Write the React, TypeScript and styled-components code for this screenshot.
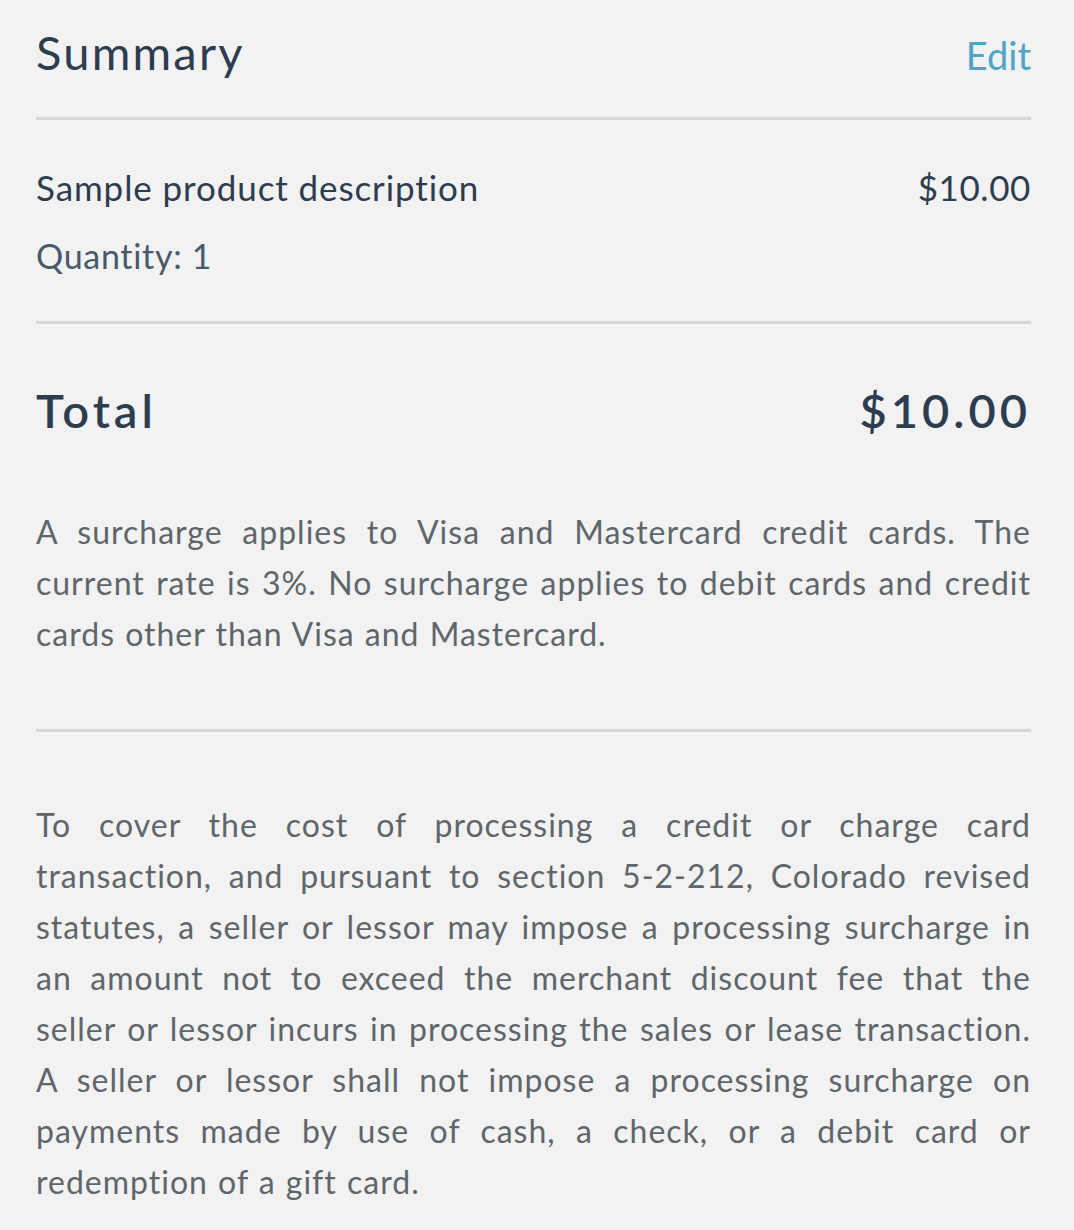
import { createGlobalStyle, styled } from "styled-components";

const GlobalStyle = createGlobalStyle`
  html, body {
    margin: 0;
    padding: 0;
    background: #f2f2f2;
  }
  body {
    font-family: "Lato", "Liberation Sans", sans-serif;
    -webkit-font-smoothing: antialiased;
  }
`;

const Wrapper = styled.div`
  width: 995px;
  padding: 0 43px 0 36px;
  min-height: 1230px;
  background: #f2f2f2;
  color: #2d3d4f;
`;

const Header = styled.div`
  display: flex;
  justify-content: space-between;
  align-items: baseline;
  height: 117px;
  padding-top: 29px;
  box-sizing: border-box;
`;

const Title = styled.h2`
  margin: 0;
  font-size: 47px;
  font-weight: 400;
  letter-spacing: 2.2px;
  line-height: 1;
`;

const EditLink = styled.a`
  font-size: 38px;
  color: #4fa5c6;
  text-decoration: none;
  cursor: pointer;
`;

const Divider = styled.hr`
  margin: 0;
  border: none;
  height: 3px;
  background: #d5d7d7;
`;

const Item = styled.div`
  padding: 46px 0 45px;
  display: flex;
  flex-direction: column;
  gap: 27px;
`;

const Row = styled.div`
  display: flex;
  justify-content: space-between;
  align-items: baseline;
`;

const ItemName = styled.span`
  font-size: 35px;
  letter-spacing: 0.9px;
`;

const ItemPrice = styled.span`
  font-size: 35px;
  letter-spacing: 0.6px;
`;

const Quantity = styled.span`
  font-size: 34px;
  letter-spacing: 0.7px;
  color: #48596b;
`;

const TotalRow = styled(Row)`
  padding: 63px 0 72px;
`;

const TotalText = styled.span`
  font-size: 47px;
  font-weight: 600;
  letter-spacing: 4px;
  line-height: 1;
`;

const Notice = styled.p<{ $top: number; $bottom: number }>`
  margin: ${(props) => props.$top}px 0 ${(props) => props.$bottom}px;
  font-size: 32px;
  line-height: 51px;
  letter-spacing: 1px;
  word-spacing: 1px;
  color: #5e666b;
  text-align: justify;
`;

function App() {
  return (
    <>
      <GlobalStyle />
      <Wrapper>
        <Header>
          <Title>Summary</Title>
          <EditLink>Edit</EditLink>
        </Header>
        <Divider />
        <Item>
          <Row>
            <ItemName>Sample product description</ItemName>
            <ItemPrice>$10.00</ItemPrice>
          </Row>
          <Quantity>Quantity: 1</Quantity>
        </Item>
        <Divider />
        <TotalRow>
          <TotalText>Total</TotalText>
          <TotalText>$10.00</TotalText>
        </TotalRow>
        <Notice $top={0} $bottom={70}>
          A surcharge applies to Visa and Mastercard credit cards. The current
          rate is 3%. No surcharge applies to debit cards and credit cards
          other than Visa and Mastercard.
        </Notice>
        <Divider />
        <Notice $top={67} $bottom={0}>
          To cover the cost of processing a credit or charge card transaction,
          and pursuant to section 5-2-212, Colorado revised statutes, a seller
          or lessor may impose a processing surcharge in an amount not to
          exceed the merchant discount fee that the seller or lessor incurs in
          processing the sales or lease transaction. A seller or lessor shall
          not impose a processing surcharge on payments made by use of cash, a
          check, or a debit card or redemption of a gift card.
        </Notice>
      </Wrapper>
    </>
  );
}

export default App;
